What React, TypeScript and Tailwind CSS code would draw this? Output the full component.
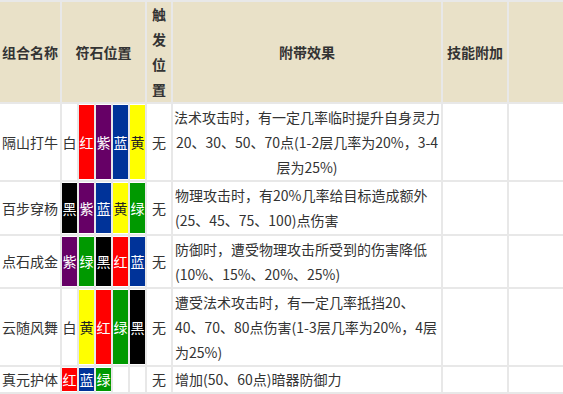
import React from 'react';

const stoneStyle: Record<string, string> = {
  白: 'bg-white text-[#333]',
  红: 'bg-[#ff0000] text-white',
  紫: 'bg-[#660066] text-white',
  蓝: 'bg-[#003399] text-white',
  黄: 'bg-[#ffff00] text-[#222]',
  绿: 'bg-[#009900] text-white',
  黑: 'bg-black text-white',
  '': 'bg-white',
};

const rows = [
  {
    name: '隔山打牛',
    stones: ['白', '红', '紫', '蓝', '黄'],
    lines: ['法术攻击时，有一定几率临时提升自身灵力', '20、30、50、70点(1-2层几率为20%，3-4', '层为25%)'],
    center: true,
  },
  {
    name: '百步穿杨',
    stones: ['黑', '紫', '蓝', '黄', '绿'],
    lines: ['物理攻击时，有20%几率给目标造成额外', '(25、45、75、100)点伤害'],
  },
  {
    name: '点石成金',
    stones: ['紫', '绿', '黑', '红', '蓝'],
    lines: ['防御时，遭受物理攻击所受到的伤害降低', '(10%、15%、20%、25%)'],
  },
  {
    name: '云随风舞',
    stones: ['白', '黄', '红', '绿', '黑'],
    lines: ['遭受法术攻击时，有一定几率抵挡20、', '40、70、80点伤害(1-3层几率为20%，4层', '为25%)'],
  },
  {
    name: '真元护体',
    stones: ['红', '蓝', '绿', '', ''],
    lines: ['增加(50、60点)暗器防御力'],
  },
];

export default function App() {
  return (
    <div className="w-[563px] h-[394px] overflow-hidden bg-white font-['Noto_Sans_CJK_SC','Liberation_Sans',sans-serif] text-[14px] text-[#333]">
      <div className="grid grid-cols-[60px_15px_15px_15px_15px_15px_24px_268px_64px_1fr] grid-rows-[100px_76px_52px_51px_76px_25px] gap-[2px] py-[2px] bg-[#e8e8e8]">
        {/* header */}
        <div className="bg-[#e9e1c8] flex items-center justify-center font-bold">组合名称</div>
        <div className="col-span-5 bg-[#e9e1c8] flex items-center justify-center font-bold">符石位置</div>
        <div className="bg-[#e9e1c8] flex items-center justify-center text-center font-bold leading-[25px] px-[5px]">触发位置</div>
        <div className="bg-[#e9e1c8] flex items-center justify-center font-bold">附带效果</div>
        <div className="bg-[#e9e1c8] flex items-center justify-center font-bold">技能附加</div>
        <div className="bg-[#e9e1c8]" />

        {rows.map((r) => (
          <React.Fragment key={r.name}>
            <div className="bg-white flex items-center justify-center whitespace-nowrap">{r.name}</div>
            {r.stones.map((s, i) => (
              <div key={i} className="bg-white py-[1px] flex">
                <div className={`flex-1 flex items-center justify-center overflow-visible whitespace-nowrap ${stoneStyle[s]}`}>{s}</div>
              </div>
            ))}
            <div className="bg-white flex items-center justify-center">无</div>
            <div
              className={`bg-white flex flex-col justify-center px-[2px] leading-[25px] whitespace-nowrap ${r.center ? 'items-center text-center' : 'items-start'}`}
            >
              {r.lines.map((l, i) => (
                <div key={i}>{l}</div>
              ))}
            </div>
            <div className="bg-white" />
            <div className="bg-white" />
          </React.Fragment>
        ))}
      </div>
    </div>
  );
}
